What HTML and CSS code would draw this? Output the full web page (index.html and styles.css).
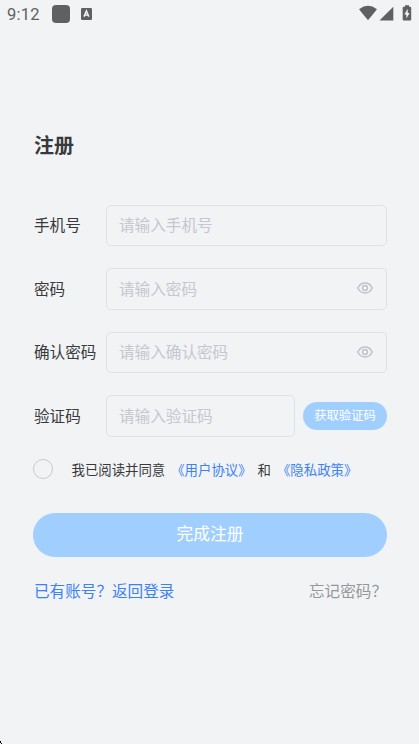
FILE: index.html
```html
<!DOCTYPE html>
<html lang="zh-CN">
<head>
<meta charset="utf-8">
<meta name="viewport" content="width=device-width, initial-scale=1">
<title>注册</title>
<link rel="stylesheet" href="styles.css">
</head>
<body>
<header class="status">
  <span class="time">9:12</span>
  <span class="app"></span>
  <svg class="badge" width="11" height="12" viewBox="0 0 11 12"><rect width="11" height="12" rx="1.2" fill="#5f6160"/><path d="M3 8.6 5.4 3 7.8 8.6M3.800 7h3.200" fill="none" stroke="#f2f3f5" stroke-width="1.500"/></svg>
  <svg class="signals" width="54" height="18" viewBox="0 0 54 18"><g fill="#5f6160"><path d="M0 4.300Q9 -2.600 18 4.300L9 15.200Z"/><path d="M34.300 1.800V15.600H20.500Z"/><path d="M46 .2h4v1.500h1.200q1 0 1 1v11.900q0 1-1 1h-6.500q-1 0-1-1V2.700q0-1 1-1H46Z"/></g><path d="M48.700 3.800 45.400 9.400h2v4.200l3.200-5.700h-1.900Z" fill="#f2f3f5"/></svg>
</header>
<main class="page">
  <h1>注册</h1>
  <form>
    <div class="row"><label for="phone">手机号</label><div class="field"><input id="phone" placeholder="请输入手机号"></div></div>
    <div class="row"><label for="pw">密码</label><div class="field"><input id="pw" type="password" placeholder="请输入密码"><svg class="eye" width="16" height="12" viewBox="0 0 16 12"><path d="M.8 6C2.400 2.700 5 1 8 1s5.600 1.700 7.200 5C13.600 9.300 11 11 8 11S2.400 9.300.8 6Z"/><circle cx="8" cy="6" r="2.400"/></svg></div></div>
    <div class="row"><label for="pw2">确认密码</label><div class="field"><input id="pw2" type="password" placeholder="请输入确认密码"><svg class="eye" width="16" height="12" viewBox="0 0 16 12"><path d="M.8 6C2.400 2.700 5 1 8 1s5.600 1.700 7.200 5C13.600 9.300 11 11 8 11S2.400 9.300.8 6Z"/><circle cx="8" cy="6" r="2.400"/></svg></div></div>
    <div class="row"><label for="code">验证码</label><div class="field"><input id="code" placeholder="请输入验证码"></div><button type="button" class="send">获取验证码</button></div>
    <div class="agree"><span class="radio"></span><span class="consent">我已阅读并同意</span><a class="terms">《用户协议》</a><span class="and">和</span><a class="privacy">《隐私政策》</a></div>
    <button type="button" class="submit">完成注册</button>
  </form>
  <div class="links"><a>已有账号？返回登录</a><span class="forgot">忘记密码？</span></div>
</main>
<i class="corner"></i>
</body>
</html>
```
FILE: styles.css
```css
* { box-sizing: border-box; }
body {
  margin: 0;
  height: 744px;
  overflow: hidden;
  position: relative;
  background: #f2f3f5;
  color: #38393b;
  font-family: "Noto Sans CJK SC", sans-serif;
  font-size: 15.6px;
}
.status {
  display: flex;
  align-items: center;
  height: 28px;
  padding: 0 6px 0 7px;
}
.time {
  width: 45px;
  font: 16.500px/28px Roboto, sans-serif;
  letter-spacing: .2px;
  color: #5f6160;
  padding-top: 1px;
}
.app {
  width: 18px;
  height: 18px;
  border-radius: 4px;
  background: #5f6160;
}
.badge { margin-left: 11px; }
.signals { margin-left: auto; }
.page { padding: 102px 32px 0 33px; }
h1 {
  margin: 0 0 44.600px 1px;
  font-size: 20px;
  line-height: 30px;
  font-weight: 700;
}
.row {
  display: flex;
  align-items: center;
  height: 41.600px;
  margin-bottom: 21.900px;
}
.row label {
  width: 73px;
  padding: 0 0 2px 1px;
  flex: none;
  white-space: nowrap;
}
.field {
  display: flex;
  align-items: center;
  flex: 1;
  min-width: 0;
  height: 100%;
  padding: 0 13px 0 12px;
  border: 1px solid #dfe1e7;
  border-radius: 5px;
}
input {
  flex: 1;
  min-width: 0;
  height: 38px;
  padding: 0 0 2px;
  border: 0;
  outline: 0;
  background: none;
  font: inherit;
}
input::placeholder { color: #c5c7cf; opacity: 1; }
.eye {
  margin-bottom: 1px;
  fill: none;
  stroke: #c0c2ca;
  stroke-width: 1.500;
}
button {
  padding: 0;
  border: 0;
  background: #a0cfff;
  color: #fff;
  font-family: inherit;
}
.send {
  flex: none;
  width: 84px;
  height: 28px;
  margin-left: 8px;
  padding-bottom: 1px;
  border-radius: 14px;
  font-size: 12.300px;
  line-height: 26px;
}
.agree {
  display: flex;
  align-items: center;
  height: 21px;
  font-size: 13.400px;
  white-space: nowrap;
}
.agree a, .consent, .and { padding-bottom: 1px; }
.radio {
  width: 20px;
  height: 20px;
  border: 1px solid #c8c9cc;
  border-radius: 50%;
}
.consent { margin-left: 18.500px; }
.terms { margin-left: 6px; }
.and { margin-left: 6px; }
.privacy { margin-left: 6px; }
a { color: #3c82f7; }
.submit {
  display: block;
  width: 100%;
  height: 44px;
  margin-top: 33.400px;
  padding-bottom: 3px;
  border-radius: 22px;
  font-size: 16.800px;
  line-height: 41px;
}
.links {
  display: flex;
  justify-content: space-between;
  margin-top: 21px;
  padding: 0 0 0 1px;
  line-height: 24px;
}
.forgot { color: #969799; }
.corner {
  position: absolute;
  left: 0;
  bottom: 0;
  width: 2px;
  height: 3px;
  background: #000;
  clip-path: polygon(0 0, 50% 0, 50% 66%, 100% 66%, 100% 100%, 50% 100%, 50% 66%, 0 66%);
}
```
